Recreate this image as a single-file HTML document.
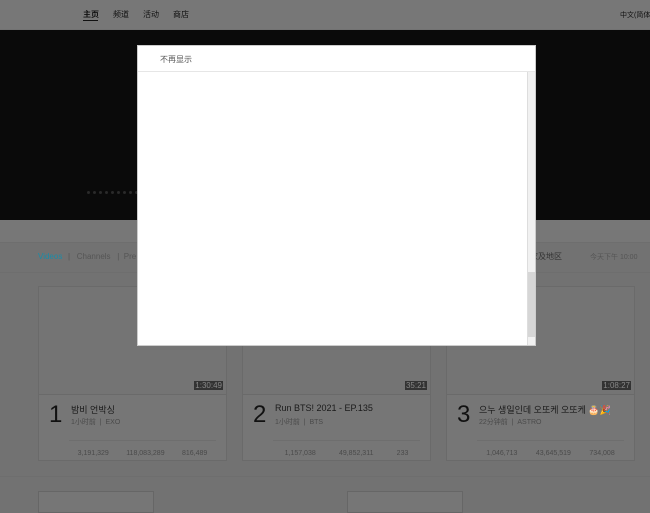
<!DOCTYPE html><html><head><meta charset="utf-8"><style>
body{margin:0;width:650px;height:500px;overflow:hidden;background:#727272;font-family:"Liberation Sans","Noto Sans CJK SC",sans-serif;position:relative}
.a{position:absolute}
.card{position:absolute;top:286px;width:189px;height:175px;background:#767676;border:1px solid #6a6a6a;box-sizing:border-box}
.thumb{height:107px;border-bottom:1px solid #6a6a6a;position:relative;background:#747474}
.dur{position:absolute;right:3px;bottom:4px;background:#333;color:#888;font-size:8px;padding:0 1px}
.num{position:absolute;left:10px;top:114px;font-size:24px;color:#111}
.t{position:absolute;left:32px;top:116px;font-size:9px;color:#1a1a1a;white-space:nowrap}
.s{position:absolute;left:32px;top:130px;font-size:7px;color:#4a4a4a}
.st{position:absolute;left:30px;right:10px;top:153px;border-top:1px solid #6e6e6e;font-size:7px;color:#4a4a4a;padding-top:9px;display:flex;justify-content:space-around}
.dot{position:absolute;top:191px;width:3px;height:3px;border-radius:50%;background:#2a2a2a}
</style></head><body>
<div class="a" style="left:0;top:0;width:650px;height:29px;background:#777"></div>
<div class="a" style="left:83px;top:9px;font-size:8px;color:#111;font-weight:bold">主页</div>
<div class="a" style="left:83px;top:20px;width:15px;height:1px;background:#111"></div>
<div class="a" style="left:113px;top:9px;font-size:8px;color:#111">频道</div>
<div class="a" style="left:143px;top:9px;font-size:8px;color:#111">活动</div>
<div class="a" style="left:173px;top:9px;font-size:8px;color:#111">商店</div>
<div class="a" style="left:620px;top:10px;font-size:7px;color:#111;white-space:nowrap">中文(简体</div>
<div class="a" style="left:0;top:30px;width:650px;height:190px;background:#0a0a0a"></div>
<div class="dot" style="left:87px"></div><div class="dot" style="left:93px"></div><div class="dot" style="left:99px"></div><div class="dot" style="left:105px"></div><div class="dot" style="left:111px"></div><div class="dot" style="left:117px"></div><div class="dot" style="left:123px"></div><div class="dot" style="left:129px"></div><div class="dot" style="left:135px"></div>
<div class="a" style="left:0;top:220px;width:650px;height:22px;background:#777;border-bottom:1px solid #6e6e6e"></div>
<div class="a" style="left:38px;top:252px;font-size:8px;color:#1a8ca8">Videos</div>
<div class="a" style="left:68px;top:252px;font-size:8px;color:#555">|&nbsp;&nbsp; Channels &nbsp;&nbsp;| &nbsp;Pre</div>
<div class="a" style="left:530px;top:251px;font-size:8px;color:#333">家及地区</div>
<div class="a" style="left:590px;top:252px;font-size:7px;color:#555">今天下午 10:00</div>
<div class="a" style="left:0;top:272px;width:650px;height:1px;background:#6e6e6e"></div>
<div class="card" style="left:38px"><div class="thumb"><span class="dur">1:30:49</span></div><div class="num">1</div><div class="t">밤비 언박싱</div><div class="s">1小时前 &nbsp;| &nbsp;EXO</div><div class="st"><span>3,191,329</span><span>118,083,289</span><span>816,489</span></div></div>
<div class="card" style="left:242px"><div class="thumb"><span class="dur">35:21</span></div><div class="num">2</div><div class="t">Run BTS! 2021 - EP.135</div><div class="s">1小时前 &nbsp;| &nbsp;BTS</div><div class="st"><span>1,157,038</span><span>49,852,311</span><span>233</span></div></div>
<div class="card" style="left:446px"><div class="thumb"><span class="dur">1:08:27</span></div><div class="num">3</div><div class="t">으누 생일인데 오또케 오또케 🎂🎉</div><div class="s">22分钟前 &nbsp;| &nbsp;ASTRO</div><div class="st"><span>1,046,713</span><span>43,645,519</span><span>734,008</span></div></div>
<div class="a" style="left:0;top:476px;width:650px;height:1px;background:#6e6e6e"></div>
<div class="a" style="left:38px;top:491px;width:114px;height:20px;border:1px solid #666;background:#767676"></div>
<div class="a" style="left:347px;top:491px;width:114px;height:20px;border:1px solid #666;background:#767676"></div>
<div class="a" style="left:137px;top:45px;width:399px;height:301px;background:#fff;border:1px solid #ccc;box-sizing:border-box">
<div style="position:absolute;left:22px;top:8px;font-size:8px;color:#555">不再显示</div>
<div style="position:absolute;left:0;right:0;top:25px;border-top:1px solid #e6e6e6"></div>
<div style="position:absolute;right:0;top:26px;bottom:0;width:7px;background:#f1f1f1;border-left:1px solid #ddd"><div style="position:absolute;left:0;right:0;top:200px;bottom:8px;background:#d6d6d6"></div></div>
</div>
</body></html>
